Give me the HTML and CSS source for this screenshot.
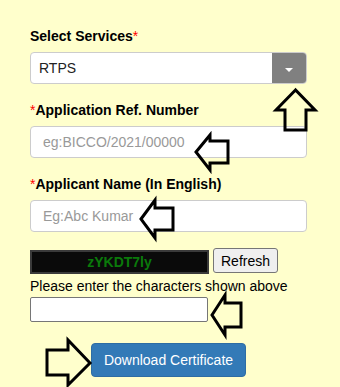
FILE: index.html
```html
<!DOCTYPE html>
<html lang="en">
<head>
    <meta charset="UTF-8">
    <meta name="viewport" content="width=device-width, initial-scale=1.0">
    <title>Download Certificate</title>
    <link rel="stylesheet" href="styles.css">
</head>
<body>

    <div class="page">
        <form class="cert-form">
            <!-- Service -->
            <div class="form-group">
                <label class="label">Select Services<span class="req">*</span></label>
                <div class="select-box">
                    <span class="select-value">RTPS</span>
                    <span class="select-btn"><span class="caret"></span></span>
                </div>
            </div>

            <!-- Application number -->
            <div class="form-group">
                <label class="label"><span class="req">*</span>Application Ref. Number</label>
                <input class="form-control" type="text" placeholder="eg:BICCO/2021/00000">
            </div>

            <!-- Applicant name -->
            <div class="form-group">
                <label class="label"><span class="req">*</span>Applicant Name (In English)</label>
                <input class="form-control" type="text" placeholder="Eg:Abc Kumar">
            </div>

            <!-- Captcha -->
            <div class="captcha-row">
                <div class="captcha-box">zYKDT7ly</div>
                <button type="button" class="refresh-btn">Refresh</button>
            </div>
            <p class="captcha-hint">Please enter the characters shown above</p>
            <input class="captcha-input" type="text">

            <div class="submit-row">
                <button type="button" class="btn-primary">Download Certificate</button>
            </div>
        </form>

        <!-- setas de ajuda por cima do formulário -->
        <svg class="arrows" width="340" height="387" viewBox="0 0 340 387">
            <polygon points="295.5,90 276,110 285,110 285,130 306,130 306,110 315,110"/>
            <polygon points="196,152 210,135 210,141 228,141 228,163 210,163 210,170"/>
            <polygon points="141,219 155,200 155,208 173,208 173,230 155,230 155,238"/>
            <polygon points="212,315 225,295 225,303 241,303 241,327 225,327 225,335"/>
            <polygon points="90,363 68,340 68,350 47,350 47,375 68,375 68,385"/>
        </svg>
    </div>

</body>
</html>
```

FILE: styles.css
```css
body {
    margin: 0;
    font-family: "Liberation Sans", Arial, sans-serif;
    font-size: 14px;
    line-height: 20px;
    color: #000;
    background-color: #ffffcc;
}
.page {
    position: relative;
    width: 340px;
    height: 387px;
    overflow: hidden;
}
.cert-form {
    width: 277px;
    padding: 26px 0 0 30px;
}
.form-group {
    margin-bottom: 16px;
}
.label {
    display: block;
    font-weight: bold;
    margin-bottom: 6px;
}
.req {
    color: #ff0000;
    font-weight: normal;
}
.select-box {
    display: flex;
    height: 32px;
    box-sizing: border-box;
    border: 1px solid #ccc;
    border-radius: 4px;
    background-color: #fff;
    overflow: hidden;
}
.select-value {
    flex: 1;
    padding-left: 8px;
    line-height: 30px;
    color: #222;
}
.select-btn {
    width: 34px;
    background-color: #808080;
    display: flex;
    align-items: center;
    justify-content: center;
}
.caret {
    width: 0;
    height: 0;
    margin-top: 3px;
    border-top: 4px solid #fff;
    border-left: 4.5px solid transparent;
    border-right: 4.5px solid transparent;
}
.form-control {
    display: block;
    width: 100%;
    height: 32px;
    box-sizing: border-box;
    padding: 0 12px;
    border: 1px solid #ccc;
    border-radius: 4px;
    background-color: #fff;
    font-family: inherit;
    font-size: 14px;
    color: #555;
}
.form-control::placeholder {
    color: #999;
}
.captcha-row {
    display: flex;
    align-items: flex-start;
}
.captcha-box {
    width: 179px;
    height: 24px;
    margin-top: 2px;
    box-sizing: border-box;
    border: 2px solid #3a3a3a;
    background-color: #0a0a0a;
    color: #0a7a0a;
    font-weight: bold;
    text-align: center;
    line-height: 20px;
}
.refresh-btn {
    width: 65px;
    height: 25px;
    margin-left: 4px;
    padding: 0;
    border: 1px solid #767676;
    border-radius: 3px;
    background-color: #efefef;
    font-family: inherit;
    font-size: 14px;
    color: #000;
}
.captcha-hint {
    margin: 2px 0 0;
}
.captcha-input {
    display: block;
    width: 178px;
    height: 25px;
    margin-top: 1px;
    box-sizing: border-box;
    border: 1px solid #767676;
    border-radius: 2px;
    background-color: #fff;
}
.submit-row {
    margin-top: 21px;
    text-align: center;
}
.btn-primary {
    height: 34px;
    padding: 6px 12px;
    border: 1px solid #2e6da4;
    border-radius: 4px;
    background-color: #337ab7;
    color: #fff;
    font-family: inherit;
    font-size: 14px;
    line-height: 20px;
}
.arrows {
    position: absolute;
    top: 0;
    left: 0;
    pointer-events: none;
}
.arrows polygon {
    fill: none;
    stroke: #000;
    stroke-width: 3;
    stroke-linejoin: miter;
}
```
